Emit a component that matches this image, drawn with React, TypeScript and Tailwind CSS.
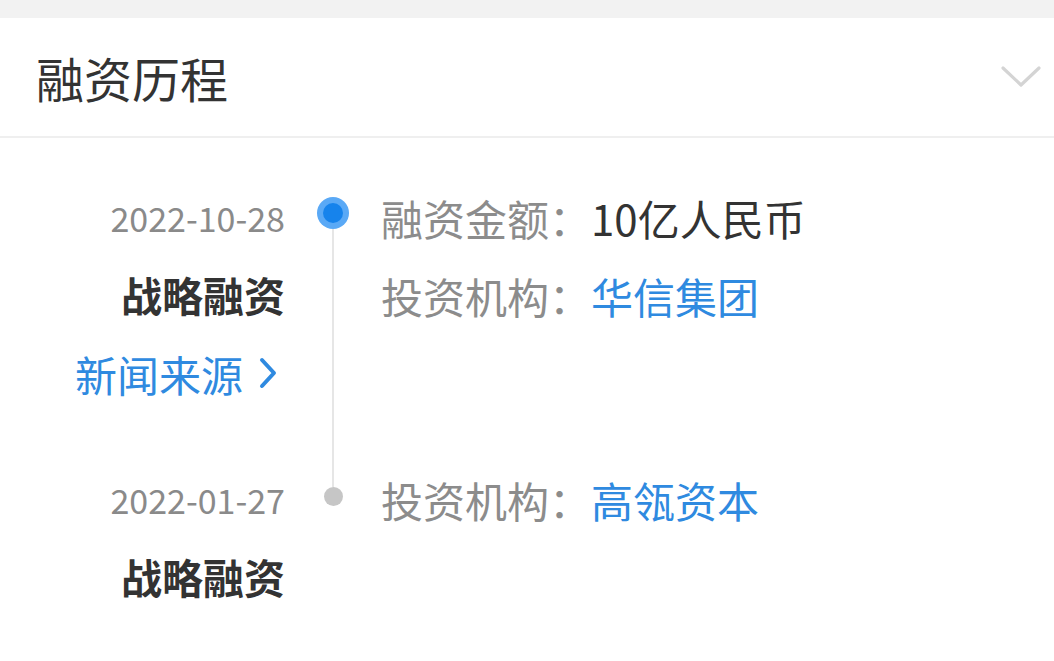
import React from 'react';

interface Round {
    date: string;
    kind: string;
    amount?: string;
    investor: string;
    news?: boolean;
    active?: boolean;
}

const rounds: Round[] = [
    { date: '2022-10-28', kind: '战略融资', amount: '10亿人民币', investor: '华信集团', news: true, active: true },
    { date: '2022-01-27', kind: '战略融资', investor: '高瓴资本' },
];

const font = { fontFamily: '"Noto Sans CJK SC", "Noto Sans", sans-serif' };

function ChevronDown() {
    return (
        <svg width="42" height="26" viewBox="0 0 42 26" fill="none">
            <polyline points="3,4 21,21 39,4" stroke="#d4d4d4" strokeWidth="3.2" strokeLinecap="round" strokeLinejoin="round" />
        </svg>
    );
}

function ChevronRight() {
    return (
        <svg width="18" height="32" viewBox="0 0 18 32" fill="none">
            <polyline points="3,3 15,16 3,29" stroke="#2f8ae0" strokeWidth="4" strokeLinecap="round" strokeLinejoin="round" />
        </svg>
    );
}

function Entry({ round, first, last }: { round: Round; first: boolean; last: boolean }) {
    return (
        <div className={`grid grid-cols-[285px_96px_1fr] ${last ? '' : 'pb-[48px]'}`}>
            {/* left: date + type */}
            <div className="flex flex-col items-end">
                <div className="h-[78px] flex items-center text-[34px] text-[#8a8a8a]">{round.date}</div>
                <div className="h-[78px] flex items-center text-[41px] font-semibold text-[#333]">{round.kind}</div>
                {round.news && (
                    <div className="h-[78px] flex items-center gap-[16px] text-[42px] text-[#2f8ae0]">
                        <span>新闻来源</span>
                        <span className="mr-[8px] flex items-center"><ChevronRight /></span>
                    </div>
                )}
            </div>

            {/* middle: timeline */}
            <div className="flex flex-col items-center">
                {round.active ? (
                    <>
                        <div className="h-[19px]" />
                        <div className="w-[32px] h-[32px] rounded-full bg-[#5aa9f6] flex items-center justify-center">
                            <div className="w-[20px] h-[20px] rounded-full bg-[#1683ec]" />
                        </div>
                    </>
                ) : (
                    <>
                        <div className={`w-[2px] h-[27px] ${first ? '' : 'bg-[#e6e6e6]'}`} />
                        <div className="w-[19px] h-[19px] rounded-full bg-[#c6c6c6]" />
                    </>
                )}
                {!last && <div className="w-[2px] flex-1 bg-[#e6e6e6] mb-[-48px]" />}
            </div>

            {/* right: details */}
            <div className="flex flex-col text-[42px]">
                {round.amount && (
                    <div className="h-[78px] flex items-center">
                        <span className="text-[#8c8c8c]">融资金额：</span>
                        <span className="text-[#333]">{round.amount}</span>
                    </div>
                )}
                <div className="h-[78px] flex items-center">
                    <span className="text-[#8c8c8c]">投资机构：</span>
                    <span className="text-[#2f8ae0]">{round.investor}</span>
                </div>
            </div>
        </div>
    );
}

export default function App() {
    return (
        <div className="w-[1054px] h-[661px] bg-white overflow-hidden" style={font}>
            <div className="h-[18px] bg-[#f2f2f2]" />

            {/* Header */}
            <div className="h-[120px] flex items-center justify-between pl-[36px] pr-[12px] border-b-2 border-[#efefef]">
                <h2 className="text-[48px] text-[#333] leading-none">融资历程</h2>
                <ChevronDown />
            </div>

            {/* Timeline */}
            <div className="pt-[40px]">
                {rounds.map((r, i) => (
                    <Entry key={r.date} round={r} first={i === 0} last={i === rounds.length - 1} />
                ))}
            </div>
        </div>
    );
}
